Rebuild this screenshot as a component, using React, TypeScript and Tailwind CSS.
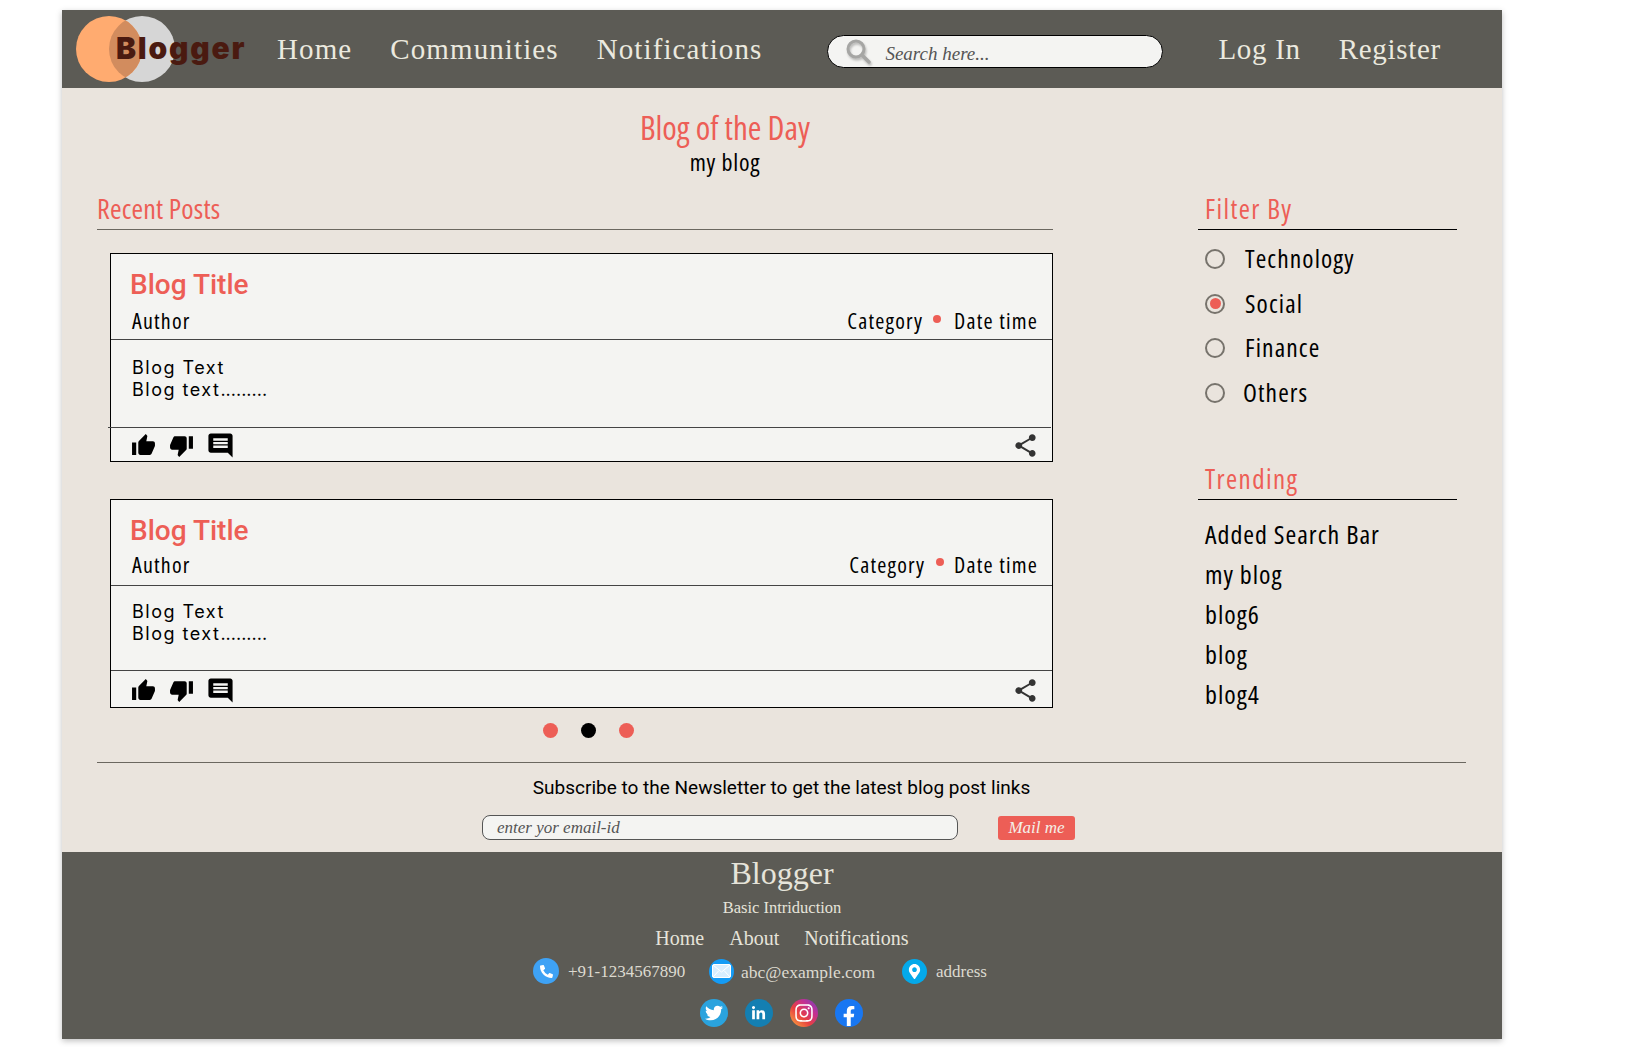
import React from "react";
import { MdThumbUp, MdThumbDown, MdComment, MdShare } from "react-icons/md";
import { FaTwitter, FaLinkedinIn, FaInstagram, FaFacebookF, FaPhoneAlt, FaMapMarkerAlt } from "react-icons/fa";

const serif = "font-['Liberation_Serif',serif]";
const narrow = "font-['Open_Sans',sans-serif] [font-stretch:75%]";

function Logo() {
  return (
    <div className="relative w-[170px] h-[68px] shrink-0">
      <svg width="100" height="68" viewBox="0 0 100 68" className="absolute left-0 top-0">
        <defs>
          <clipPath id="orange"><circle cx="33" cy="34" r="33" /></clipPath>
        </defs>
        <circle cx="66" cy="34" r="33" fill="#d6d6d6" />
        <circle cx="33" cy="34" r="33" fill="#ffab70" />
        <circle cx="66" cy="34" r="33" fill="#d28c5e" clipPath="url(#orange)" />
      </svg>
      <span className="absolute left-[40px] top-[14px] text-[30px] leading-[38px] tracking-[1.8px] font-black text-[#4a1a10] font-['Inter',sans-serif]">Blogger</span>
    </div>
  );
}

function Card({ mt, second }: { mt: string; second?: boolean }) {
  return (
    <div className={`${mt} ml-[13px] w-[943px] h-[209px] border border-black bg-[#f4f4f2] flex flex-col`}>
      <div className="h-[86px] border-b border-[#444] pl-[19px] pr-[14px] shrink-0">
        <div className="text-[28px] leading-[33px] pt-[14px] font-medium text-[#ed5e56] font-['Roboto',sans-serif]">Blog Title</div>
        <div className={`${second ? "mt-[3px]" : "mt-[6px]"} flex items-center justify-between pl-[2px] text-[22px] leading-[26px] tracking-[1.2px] font-medium text-black ${narrow}`}>
          <span>Author</span>
          <span className="flex items-center">
            <span className={second ? "mt-[1px]" : ""}>Category</span>
            <span className={`${second ? "ml-[11px] mr-[10px]" : "ml-[10px] mr-[13px]"} w-[8px] h-[8px] rounded-full bg-[#ed5e56] mb-[3px]`} />
            <span>Date time</span>
          </span>
        </div>
      </div>
      <div className={`${second ? "h-[85px] pt-[15px] pl-[21px]" : "h-[88px] pt-[17px] pl-[24px] -ml-[3px] w-[943px]"} border-b border-[#444] shrink-0 text-[18px] leading-[22px] tracking-[1.5px] text-black font-['Inter',sans-serif]`}>
        <div>Blog Text</div>
        <div>Blog text<span className="tracking-[0px]">.........</span></div>
      </div>
      <div className="flex-1 flex items-center justify-between pl-[20px] pr-[13px] pt-[2px]">
        <div className="flex items-center gap-[13px]">
          <MdThumbUp size={25} className="text-black" />
          <MdThumbDown size={25} className="text-black" />
          <MdComment size={29} className="text-black -ml-[1px]" />
        </div>
        <MdShare size={27} className="text-[#333]" />
      </div>
    </div>
  );
}

function Radio({ label, checked, labelMl }: { label: string; checked?: boolean; labelMl: string }) {
  return (
    <div className="h-[44.5px] flex items-center pl-[7px]">
      <span className="w-[20px] h-[20px] rounded-full border-2 border-[#77736c] flex items-center justify-center shrink-0">
        {checked && <span className="w-[11px] h-[11px] rounded-full bg-[#ed5e56]" />}
      </span>
      <span className={`${labelMl} mb-[2px] whitespace-nowrap text-[25.5px] leading-[30px] tracking-[1.1px] font-medium text-black ${narrow}`}>{label}</span>
    </div>
  );
}

function Circle({ bg, size, children }: { bg: string; size: string; children: React.ReactNode }) {
  return <span className={`${bg} ${size} rounded-full flex items-center justify-center text-white shrink-0 overflow-hidden`}>{children}</span>;
}

export default function App() {
  return (
    <div className="min-h-screen bg-white pt-[10px] pl-[62px]">
      <div className="w-[1440px] shadow-[0_2px_6px_rgba(0,0,0,0.25)]">
        <header className={`h-[78px] bg-[#5c5b55] flex items-center pl-[14px] text-[#ebe9df] ${serif}`}>
          <Logo />
          <nav className="flex items-center gap-[38px] ml-[31px] text-[29px] tracking-[1.1px] leading-[36px]">
            <span>Home</span>
            <span>Communities</span>
            <span>Notifications</span>
          </nav>
          <div className="ml-[65px] mt-[4px] w-[336px] h-[33px] rounded-full border border-black bg-[#f4f4f2] flex items-center pl-[17px] shrink-0">
            <svg width="27" height="27" viewBox="0 0 27 27" fill="none" className="shrink-0 drop-shadow-[1px_2px_1px_rgba(0,0,0,0.25)]">
              <circle cx="11" cy="11" r="8" stroke="#a6a6a4" strokeWidth="3" />
              <path d="M17 17l7 7" stroke="#a6a6a4" strokeWidth="3.5" strokeLinecap="round" />
            </svg>
            <span className="ml-[13px] mt-[7px] text-[19px] italic text-[#555]">Search here...</span>
          </div>
          <div className="ml-[55px] flex items-center gap-[38px] text-[29px] tracking-[0.7px] leading-[36px]">
            <span>Log In</span>
            <span>Register</span>
          </div>
        </header>

        <main className="h-[764px] bg-[#eae4dd] pl-[35px]">
          <div className="w-[1256px] pt-[21px] text-center">
            <div className={`text-[33px] leading-[38px] text-[#ed5e56] ${narrow}`}>Blog of the Day</div>
            <div className={`mt-[1px] text-[24px] leading-[28px] tracking-[0.8px] text-black ${narrow}`}>my blog</div>
          </div>
          <div className="flex mt-[20px]">
            <div className="w-[956px]">
              <div className={`h-[34px] border-b border-[#6b675f] text-[28px] leading-[25px] tracking-[0.2px] text-[#ed5e56] ${narrow}`}>Recent Posts</div>
              <Card mt="mt-[23px]" />
              <Card mt="mt-[37px]" second />
              <div className="mt-[15px] ml-[446px] flex gap-[23px]">
                <span className="w-[15px] h-[15px] rounded-full bg-[#ed5e56]" />
                <span className="w-[15px] h-[15px] rounded-full bg-black" />
                <span className="w-[15px] h-[15px] rounded-full bg-[#ed5e56]" />
              </div>
            </div>
            <aside className="ml-[145px] w-[259px]">
              <div className={`h-[34px] border-b border-black pl-[7px] text-[27px] leading-[25px] tracking-[1.4px] text-[#ed5e56] ${narrow}`}>Filter By</div>
              <div className="mt-[7px]">
                <Radio label="Technology" labelMl="ml-[20px]" />
                <Radio label="Social" checked labelMl="ml-[20px]" />
                <Radio label="Finance" labelMl="ml-[20px]" />
                <Radio label="Others" labelMl="ml-[18px]" />
              </div>
              <div className={`mt-[51px] h-[34px] border-b border-black pl-[7px] text-[27px] leading-[25px] tracking-[1.4px] text-[#ed5e56] ${narrow}`}>Trending</div>
              <div className={`mt-[14px] pl-[7px] text-[26px] leading-[40px] tracking-[1px] font-medium text-black ${narrow}`}>
                <div className="whitespace-nowrap">Added Search Bar</div>
                <div>my blog</div>
                <div>blog6</div>
                <div>blog</div>
                <div>blog4</div>
              </div>
            </aside>
          </div>
          <div className="w-[1369px] border-t border-[#6b675f] mt-[24px]">
            <div className="mt-[13px] text-center text-[19px] leading-[24px] text-black font-['Roboto',sans-serif]">Subscribe to the Newsletter to get the latest blog post links</div>
            <div className={`mt-[15px] ml-[385px] flex items-center gap-[40px] ${serif}`}>
              <div className="w-[476px] h-[25px] rounded-[8px] border border-[#555] bg-[#f4f4f2] pl-[14px] text-[17px] leading-[23px] italic text-[#555]">enter yor email-id</div>
              <div className="w-[77px] h-[24px] rounded-[3px] bg-[#ed5e56] text-center text-[17px] leading-[24px] italic text-[#f4f0e8]">Mail me</div>
            </div>
          </div>
        </main>

        <footer className={`h-[187px] pt-[2px] bg-[#5c5b55] flex flex-col items-center text-[#e6e4da] ${serif}`}>
          <div className="text-[32px] leading-[38px]">Blogger</div>
          <div className="mt-[6px] text-[16.5px] leading-[20px]">Basic Intriduction</div>
          <div className="mt-[8px] flex gap-[25px] text-[20px] leading-[24px]">
            <span>Home</span>
            <span>About</span>
            <span>Notifications</span>
          </div>
          <div className="mt-[7px] self-start ml-[471px] flex items-center text-[17px] leading-[26px] text-[#dcdad0]">
            <Circle bg="bg-[#3ea2f5]" size="w-[26px] h-[26px]"><FaPhoneAlt size={13} /></Circle>
            <span className="ml-[9px] mt-[2px] w-[118px] whitespace-nowrap">+91-1234567890</span>
            <span className="ml-[23px]">
              <Circle bg="bg-[#149bf5]" size="w-[25px] h-[25px]">
                <svg width="19" height="14" viewBox="0 0 19 14" fill="#d8eeff" stroke="#fff" strokeWidth="1">
                  <rect x="0.5" y="0.5" width="18" height="13" rx="1.5" />
                  <path d="M1 1l8.5 7L18 1M1 13l6-6.5M18 13l-6-6.5" fill="none" />
                </svg>
              </Circle>
            </span>
            <span className="ml-[7px] mt-[2px] w-[135px] whitespace-nowrap text-[17.5px]">abc@example.com</span>
            <span className="ml-[26px]"><Circle bg="bg-[#04a9ea]" size="w-[25px] h-[25px]"><FaMapMarkerAlt size={15} /></Circle></span>
            <span className="ml-[9px] mt-[2px]">address</span>
          </div>
          <div className="mt-[14px] flex gap-[17px] pr-[2px]">
            <Circle bg="bg-[#2aa3de]" size="w-[28px] h-[28px]"><FaTwitter size={18} /></Circle>
            <Circle bg="bg-[#147fb2]" size="w-[28px] h-[28px]"><FaLinkedinIn size={15} /></Circle>
            <Circle bg="bg-[linear-gradient(45deg,#fbb040,#e8403f_40%,#c22f94_70%,#6a46c4)]" size="w-[28px] h-[28px]"><FaInstagram size={20} /></Circle>
            <Circle bg="bg-[#1877f2]" size="w-[28px] h-[28px]"><FaFacebookF size={20} className="mt-[6px]" /></Circle>
          </div>
        </footer>
      </div>
    </div>
  );
}
